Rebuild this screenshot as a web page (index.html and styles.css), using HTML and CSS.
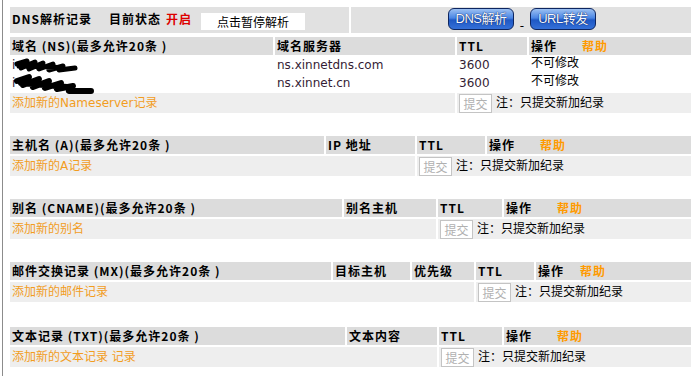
FILE: index.html
```html
<!DOCTYPE html>
<html>
	<head>
		<meta charset="utf-8">
		<title>DNS解析记录</title>
		<link rel="stylesheet" href="styles.css">
	</head>
	<body>
		<div class="wrapper">
			<table class="topbar">
				<colgroup><col class="c1"><col></colgroup>
				<tr>
					<td class="title-cell">
						<span class="title">DNS解析记录</span><span class="state">目前状态</span><span class="on">开启</span><span class="pause">点击暂停解析</span>
					</td>
					<td class="switch-cell">
						<a href="#" class="blue-btn">DNS解析</a><span class="dash">-</span><a href="#" class="blue-btn">URL转发</a>
					</td>
				</tr>
			</table>

			<table class="records ns">
				<colgroup><col class="c1"><col class="c2"><col class="c3"><col></colgroup>
				<tr class="head">
					<td>域名 (NS)(最多允许20条 )</td>
					<td>域名服务器</td>
					<td>TTL</td>
					<td>操作<span class="help">帮助</span></td>
				</tr>
				<tr class="data">
					<td>i<svg class="scribble" width="66" height="16" viewBox="0 0 66 16"><path d="M2 6 L12 3 L6 10 L20 4 L14 11 L28 5 L24 11 L38 6 L34 12 L48 8 L44 12 L60 10 M4 8 L40 9" fill="none" stroke="#000" stroke-width="5" stroke-linejoin="round" stroke-linecap="round"/></svg></td>
					<td>ns.xinnetdns.com</td>
					<td>3600</td>
					<td class="fixed">不可修改</td>
				</tr>
				<tr class="data">
					<td>i<svg class="scribble" width="80" height="18" viewBox="0 0 80 18"><path d="M2 6 L14 2 L8 10 L24 4 L18 12 L34 6 L30 13 L46 8 L42 14 L58 11 L54 16 L76 16 M6 8 L52 12" fill="none" stroke="#000" stroke-width="6" stroke-linejoin="round" stroke-linecap="round"/></svg></td>
					<td>ns.xinnet.cn</td>
					<td>3600</td>
					<td class="fixed">不可修改</td>
				</tr>
				<tr class="add">
					<td colspan="2"><a href="#">添加新的Nameserver记录</a></td>
					<td colspan="2"><button class="submit">提交</button>注：只提交新加纪录</td>
				</tr>
			</table>

			<table class="records a">
				<colgroup><col class="c1"><col class="c2"><col class="c3"><col></colgroup>
				<tr class="head">
					<td>主机名 (A)(最多允许20条 )</td>
					<td>IP 地址</td>
					<td>TTL</td>
					<td>操作<span class="help">帮助</span></td>
				</tr>
				<tr class="add">
					<td colspan="2"><a href="#">添加新的A记录</a></td>
					<td colspan="2"><button class="submit">提交</button>注：只提交新加纪录</td>
				</tr>
			</table>

			<table class="records cname">
				<colgroup><col class="c1"><col class="c2"><col class="c3"><col></colgroup>
				<tr class="head">
					<td>别名 (CNAME)(最多允许20条 )</td>
					<td>别名主机</td>
					<td>TTL</td>
					<td>操作<span class="help">帮助</span></td>
				</tr>
				<tr class="add">
					<td colspan="2"><a href="#">添加新的别名</a></td>
					<td colspan="2"><button class="submit">提交</button>注：只提交新加纪录</td>
				</tr>
			</table>

			<table class="records mx">
				<colgroup><col class="c1"><col class="c2"><col class="c3"><col class="c4"><col></colgroup>
				<tr class="head">
					<td>邮件交换记录 (MX)(最多允许20条 )</td>
					<td>目标主机</td>
					<td>优先级</td>
					<td>TTL</td>
					<td>操作<span class="help">帮助</span></td>
				</tr>
				<tr class="add">
					<td colspan="3"><a href="#">添加新的邮件记录</a></td>
					<td colspan="2"><button class="submit">提交</button>注：只提交新加纪录</td>
				</tr>
			</table>

			<table class="records txt">
				<colgroup><col class="c1"><col class="c2"><col class="c3"><col></colgroup>
				<tr class="head">
					<td>文本记录 (TXT)(最多允许20条 )</td>
					<td>文本内容</td>
					<td>TTL</td>
					<td>操作<span class="help">帮助</span></td>
				</tr>
				<tr class="add">
					<td colspan="2"><a href="#">添加新的文本记录 记录</a></td>
					<td colspan="2"><button class="submit">提交</button>注：只提交新加纪录</td>
				</tr>
			</table>
		</div>
	</body>
</html>
```

FILE: styles.css
```css
body {
	margin: 0px;
	font-family: "DejaVu Sans", "Noto Sans CJK SC", sans-serif;
	font-size: 12px;
	color: #000;
	background: #fff;
}

.wrapper {
	margin-left: 2px;
	border-left: 1px solid #8c8c8c;
	padding: 5px 0 0 5px;
	min-height: 100vh;
	box-sizing: border-box;
}

table {
	border-spacing: 2px;
	width: 685px;
	table-layout: fixed;
	font-size: 12px;
}

td {
	padding: 0 0 0 2px;
	white-space: nowrap;
}

/* top bar */
.topbar .c1 {
	width: 339px;
}

.topbar td {
	background: #e1e1e1;
	height: 26px;
	vertical-align: middle;
}

.title-cell {
	font-family: "Noto Sans CJK SC", sans-serif;
	font-weight: bold;
	letter-spacing: 1px;
}

.state {
	margin-left: 17px;
}

.on {
	color: #dd0000;
	margin-left: 5px;
}

.pause {
	display: inline-block;
	margin-left: 9px;
	width: 104px;
	height: 17px;
	line-height: 17px;
	background: #fff;
	text-align: center;
	font-weight: normal;
	letter-spacing: 0;
	vertical-align: middle;
}

.switch-cell {
	text-align: center;
}

.blue-btn {
	display: inline-block;
	box-sizing: border-box;
	width: 66px;
	height: 22px;
	line-height: 20px;
	border: 1px solid #0d2560;
	border-radius: 6px;
	background: linear-gradient(to bottom, #9cc0f2 0%, #4a86e4 45%, #1f58c4 55%, #3470d8 100%);
	color: #f4f8ff;
	font-family: "Liberation Sans", "Noto Sans CJK SC", sans-serif;
	font-size: 13px;
	letter-spacing: -0.5px;
	text-decoration: none;
	text-shadow: 0 0 1px #0a2468, 0 0 1px #0a2468;
	vertical-align: middle;
}

.dash {
	display: inline-block;
	width: 16px;
	text-align: center;
	vertical-align: -7px;
	line-height: 12px;
}

/* record tables */
.records {
	margin-top: 19px;
}

.topbar + .records {
	margin-top: 0px;
}

.records.txt {
	margin-top: 21px;
}

.head td {
	background: #dcdcdc;
	height: 18px;
	line-height: 18px;
	font-family: "Noto Sans CJK SC", sans-serif;
	font-weight: bold;
	letter-spacing: 1px;
	overflow: hidden;
}

.help {
	color: #ff9a00;
	margin-left: 25px;
}

.mx .help {
	margin-left: 16px;
}

.data td {
	height: 16px;
	line-height: 16px;
	color: #341c34;
}

.data td.fixed {
	vertical-align: top;
	line-height: 12px;
	color: #000;
}

.scribble {
	vertical-align: middle;
	margin: -4px 0;
	overflow: visible;
}

.add td {
	background: #eeeeee;
	height: 20px;
	line-height: 19px;
	vertical-align: middle;
}

.add a {
	color: #f29d1e;
	text-decoration: none;
}

.submit {
	width: 33px;
	height: 19px;
	padding: 0px;
	margin: 0 4px 0 0;
	border: 1px solid #c4c4c4;
	background: #fff;
	color: #b0b0b0;
	font-family: "Noto Sans CJK SC", sans-serif;
	font-size: 12px;
	line-height: 15px;
	vertical-align: middle;
}

/* column widths */
.ns .c1 { width: 263px; }
.ns .c2 { width: 180px; }
.ns .c3 { width: 70px; }

.a .c1 { width: 314px; }
.a .c2 { width: 89px; }
.a .c3 { width: 68px; }

.cname .c1 { width: 332px; }
.cname .c2 { width: 92px; }
.cname .c3 { width: 64px; }

.mx .c1 { width: 321px; }
.mx .c2 { width: 77px; }
.mx .c3 { width: 62px; }
.mx .c4 { width: 58px; }

.txt .c1 { width: 335px; }
.txt .c2 { width: 90px; }
.txt .c3 { width: 63px; }
```
